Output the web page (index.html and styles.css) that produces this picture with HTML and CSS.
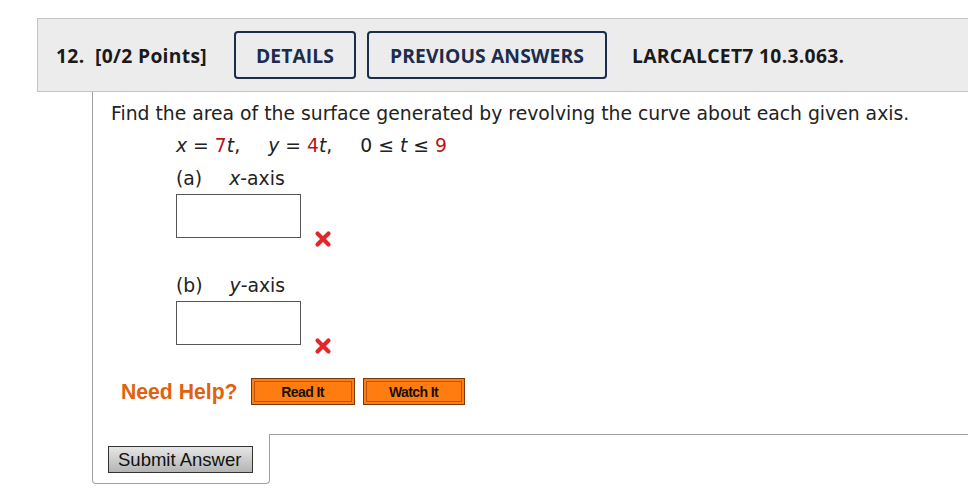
FILE: index.html
```html
<!DOCTYPE html>
<html>
<head>
<meta charset="utf-8">
<link rel="stylesheet" href="styles.css">
</head>
<body>
<div class="page">
  <div class="qhead">
    <span class="qnum">12.&nbsp; [0/2 Points]</span>
    <span class="btn details">DETAILS</span>
    <span class="btn prev">PREVIOUS ANSWERS</span>
    <span class="code">LARCALCET7 10.3.063.</span>
  </div>
  <div class="qbody">
    <p class="intro">Find the area of the surface generated by revolving the curve about each given axis.</p>
    <div class="indent">
      <p class="eq"><i>x</i> = <span class="red">7</span><i>t</i>,<span class="sp"></span><i>y</i> = <span class="red">4</span><i>t</i>,<span class="sp"></span>0 ≤ <i>t</i> ≤ <span class="red">9</span></p>
      <p class="part">(a)<span class="sp2"></span><i>x</i>-axis</p>
      <div class="ans"><span class="box"></span><svg class="mark" width="18" height="18" viewBox="0 0 18 18"><path d="M3.5 3.5 L14.5 14.5 M14.5 3.5 L3.5 14.5" stroke="#e3262a" stroke-width="4.2" stroke-linecap="round"/></svg></div>
      <p class="part partb">(b)<span class="sp2"></span><i>y</i>-axis</p>
      <div class="ans"><span class="box"></span><svg class="mark" width="18" height="18" viewBox="0 0 18 18"><path d="M3.5 3.5 L14.5 14.5 M14.5 3.5 L3.5 14.5" stroke="#e3262a" stroke-width="4.2" stroke-linecap="round"/></svg></div>
    </div>
    <div class="help">
      <span class="needhelp">Need Help?</span>
      <span class="hbtn read"><span>Read It</span></span>
      <span class="hbtn watch"><span>Watch It</span></span>
    </div>
  </div>
  <div class="footer">
    <div class="tab"><span class="submit">Submit Answer</span></div>
    <div class="rest"></div>
  </div>
</div>
</body>
</html>
```
FILE: styles.css
```css
html, body { margin: 0; padding: 0; background: #fff; }
body { overflow: hidden; }
.page { margin: 18px 0 0 37px; width: 931px; }
.qhead {
  display: flex; align-items: center;
  height: 72px;
  background: #ececec;
  border-top: 1px solid #c4c4c4;
  border-bottom: 1px solid #c4c4c4;
  border-left: 1px solid #c4c4c4;
  padding-left: 18px;
  font-family: "Open Sans", "Noto Sans", sans-serif;
  font-weight: 700;
  font-size: 19.3px;
  letter-spacing: 0.3px;
  color: #1a1a1a;
}
.qnum { width: 178px; }
.btn {
  box-sizing: border-box;
  height: 48px;
  display: flex; align-items: center; justify-content: center;
  border: 2px solid #1b2c4c;
  border-radius: 4px;
  color: #1b2c4c;
  letter-spacing: 0.1px;
}
.details { width: 122px; }
.prev { width: 240px; margin-left: 11px; }
.code { margin-left: 25px; }
.qbody {
  margin-left: 55px;
  border-left: 1px solid #a0a0a0;
  padding: 1px 0 0 18px;
  font-family: "DejaVu Sans", Verdana, sans-serif;
  font-size: 18.8px;
  color: #222;
  height: 341px;
}
p { margin: 0; }
.intro { margin-top: 8px; line-height: 26px; }
.indent { padding-left: 65px; }
.eq { margin-top: 6px; line-height: 26px; }
.red { color: #b8141a; }
.sp { display: inline-block; width: 28px; }
.sp2 { display: inline-block; width: 27px; }
.part { margin-top: 7px; line-height: 26px; }
.partb { margin-top: 35px; }
.ans { display: flex; align-items: flex-end; margin-top: 2px; }
.box {
  display: block; width: 123px; height: 42px;
  border: 1px solid #555;
}
.mark { margin: 0 0 -10px 13px; }
.help {
  display: flex; align-items: center;
  margin-top: 33px;
  padding-left: 10px;
}
.needhelp {
  font-family: "Liberation Sans", Arial, sans-serif;
  font-weight: 700;
  font-size: 21.2px;
  color: #e0620e;
  margin-right: 13px;
}
.hbtn {
  box-sizing: border-box;
  height: 27px;
  border: 1px solid #7a3a08;
  background: #ff7d10;
  padding: 2px;
  margin-right: 8px;
}
.read { width: 104px; }
.watch { width: 102px; }
.hbtn span {
  box-sizing: border-box;
  display: flex; align-items: center; justify-content: center;
  height: 100%;
  border: 1px solid #b8520a;
  font-family: "Liberation Sans", Arial, sans-serif;
  font-weight: 700;
  font-size: 14px;
  letter-spacing: -0.6px;
  color: #1a1008;
}
.footer { display: flex; margin-left: 55px; }
.tab {
  box-sizing: border-box;
  width: 178px; height: 50px;
  border: 1px solid #a0a0a0;
  border-top: none;
  border-radius: 0 0 4px 4px;
  padding: 12px 0 0 15px;
}
.submit {
  box-sizing: border-box;
  display: inline-flex; align-items: center;
  height: 27px; width: 145px;
  padding-left: 9px;
  border: 1px solid #333;
  background: linear-gradient(#e6e6e6, #b4b4b4);
  font-family: "Liberation Sans", Arial, sans-serif;
  font-size: 18.5px;
  color: #111;
}
.rest { flex: 1; border-top: 1px solid #a0a0a0; }
```
